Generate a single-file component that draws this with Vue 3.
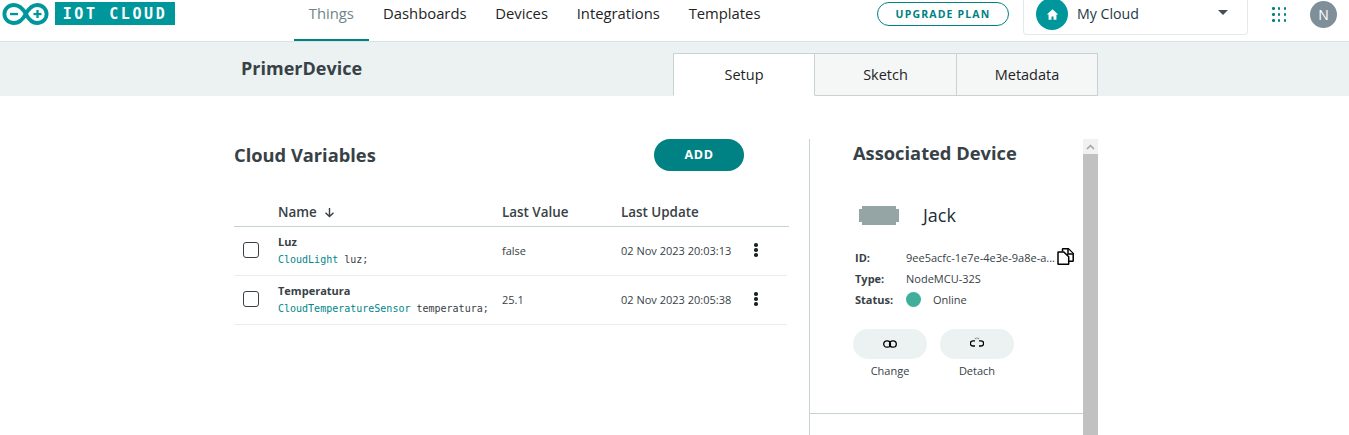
<script setup>
const navItems = ['Things', 'Dashboards', 'Devices', 'Integrations', 'Templates']
const tabs = ['Setup', 'Sketch', 'Metadata']
const variables = [
  { name: 'Luz', type: 'CloudLight', decl: 'luz;', value: 'false', updated: '02 Nov 2023 20:03:13' },
  { name: 'Temperatura', type: 'CloudTemperatureSensor', decl: 'temperatura;', value: '25.1', updated: '02 Nov 2023 20:05:38' }
]
const dots = [0, 1, 2, 3, 4, 5, 6, 7, 8]
</script>

<template>
  <div class="page">
    <header class="topbar">
      <div class="brand">
        <svg class="infinity" width="49" height="24" viewBox="0 0 49 24">
          <path d="M24.8 12C22 6.800 18.400 3 13 3 7.500 3 3.400 7 3.400 12s4.100 9 9.600 9c5.400 0 9-3.800 11.800-9 2.800-5.200 6.400-9 11.200-9 5.500 0 9.600 4 9.600 9s-4.100 9-9.600 9c-4.800 0-8.400-3.800-11.200-9z" fill="none" stroke="#00979c" stroke-width="3.800" />
          <rect x="9" y="10.900" width="8" height="2.300" fill="#00979c" />
          <rect x="32.500" y="10.900" width="8" height="2.300" fill="#00979c" />
          <rect x="35.350" y="8" width="2.300" height="8" fill="#00979c" />
        </svg>
        <span class="brand-box">IOT CLOUD</span>
      </div>
      <nav class="nav">
        <a v-for="(item, i) in navItems" :key="item" class="nav-item" :class="{ active: i === 0 }">{{ item }}</a>
      </nav>
      <button class="upgrade">UPGRADE PLAN</button>
      <div class="space-select">
        <span class="home">
          <svg width="15" height="15" viewBox="0 0 16 16">
            <path d="M8 2.500 2 8h1.800v5.500h3.100V10h2.200v3.500h3.100V8H14z" fill="#fff" />
          </svg>
        </span>
        <span class="space-name">My Cloud</span>
        <span class="caret"></span>
      </div>
      <div class="apps">
        <i v-for="d in dots" :key="d"></i>
      </div>
      <span class="avatar">N</span>
    </header>

    <section class="subbar">
      <h1 class="device-title">PrimerDevice</h1>
      <div class="tabs">
        <div v-for="(tab, i) in tabs" :key="tab" class="tab" :class="{ current: i === 0 }">{{ tab }}</div>
      </div>
    </section>

    <main class="content">
      <section class="vars">
        <div class="vars-head">
          <h2>Cloud Variables</h2>
          <button class="add">ADD</button>
        </div>
        <div class="row head-row">
          <span class="col-check"></span>
          <span class="col-name">Name
            <svg class="sort" width="11" height="11" viewBox="0 0 11 11">
              <path d="M5.500 1v8.500M1.500 5.800l4 3.800 4-3.800" fill="none" stroke="#374146" stroke-width="1.400" />
            </svg>
          </span>
          <span class="col-value">Last Value</span>
          <span class="col-update">Last Update</span>
        </div>
        <div v-for="v in variables" :key="v.name" class="row body-row">
          <span class="col-check"><span class="checkbox"></span></span>
          <div class="col-name">
            <div class="var-name">{{ v.name }}</div>
            <code class="var-code"><span class="var-type">{{ v.type }}</span> {{ v.decl }}</code>
          </div>
          <span class="col-value">{{ v.value }}</span>
          <span class="col-update">{{ v.updated }}</span>
          <span class="kebab"><i></i><i></i><i></i></span>
        </div>
      </section>

      <aside class="device">
        <div class="device-inner">
          <h2>Associated Device</h2>
          <div class="device-head">
            <svg width="42" height="21" viewBox="0 0 42 21">
              <rect x="1" y="1" width="40" height="19" fill="#95a5a6" />
              <path d="M1 1h3v3H1zM38 1h3v3h-3zM1 17h3v3H1zM38 17h3v3h-3z" fill="#fff" />
            </svg>
            <span class="device-name">Jack</span>
          </div>
          <dl class="info">
            <div class="info-row">
              <dt>ID:</dt>
              <dd class="id-value"><span>9ee5acfc-1e7e-4e3e-9a8e-a...</span>
                <svg class="copy" width="17" height="17" viewBox="0 0 17 17">
                  <path d="M5.500 3.500V1.200a.5.5 0 0 1 .5-.5h5.300l4.900 4.800v7.300a.5.5 0 0 1-.5.5h-3.700" fill="none" stroke="#000" stroke-width="1.500" />
                  <path d="M11 1v5h5M1.500 4h5.300l4.900 4.700v7.100a.5.5 0 0 1-.5.5H1.500a.5.5 0 0 1-.5-.5V4.500a.5.5 0 0 1 .5-.5z" fill="#fff" stroke="#000" stroke-width="1.500" />
                </svg>
              </dd>
            </div>
            <div class="info-row">
              <dt>Type:</dt>
              <dd>NodeMCU-32S</dd>
            </div>
            <div class="info-row">
              <dt>Status:</dt>
              <dd class="status"><span class="dot"></span>Online</dd>
            </div>
          </dl>
          <div class="actions">
            <div class="action">
              <span class="pill">
                <svg width="14" height="8" viewBox="0 0 14 8">
                  <rect x="0.700" y="0.800" width="6.800" height="6.400" rx="3.200" fill="none" stroke="#000" stroke-width="1.300" />
                  <rect x="6.500" y="0.800" width="6.800" height="6.400" rx="3.200" fill="none" stroke="#000" stroke-width="1.300" />
                </svg>
              </span>
              <span class="action-label">Change</span>
            </div>
            <div class="action">
              <span class="pill">
                <svg width="14" height="13" viewBox="0 0 14 13">
                  <path d="M5 3.800H3a2.600 2.600 0 0 0 0 5.200h2M9 3.800h2a2.600 2.600 0 0 1 0 5.200H9" fill="none" stroke="#000" stroke-width="1.300" />
                  <path d="M5.200 .8l.5 1.500M7 .3v1.700M8.800 .8l-.5 1.500" stroke="#7f8f8f" stroke-width="1" />
                </svg>
              </span>
              <span class="action-label">Detach</span>
            </div>
          </div>
          <div class="divider"></div>
        </div>
        <div class="scrollbar">
          <div class="scroll-up">
            <svg width="9" height="6" viewBox="0 0 9 6">
              <path d="M1 5l3.500-3.500L8 5" fill="none" stroke="#a3a3a3" stroke-width="1.500" />
            </svg>
          </div>
          <div class="scroll-thumb"></div>
        </div>
      </aside>
    </main>
  </div>
</template>

<style>
html, body {
  margin: 0;
  height: 100%;
  overflow: hidden;
  background: #fff;
}
</style>

<style scoped>
.page {
  height: 435px;
  overflow: hidden;
  font-family: "Open Sans", "Noto Sans", sans-serif;
  color: #374146;
  background: #fff;
}
.topbar {
  height: 41px;
  display: flex;
  align-items: flex-start;
  border-bottom: 1px solid #dae3e3;
}
.brand {
  width: 294px;
  flex: none;
  display: flex;
  align-items: flex-start;
  padding: 2px 0 0 1px;
  box-sizing: border-box;
}
.infinity {
  flex: none;
  margin-right: 5px;
}
.brand-box {
  width: 120px;
  height: 23px;
  background: #00979c;
  color: #fff;
  font-family: "DejaVu Sans Mono", monospace;
  font-weight: 700;
  font-size: 15px;
  line-height: 25px;
  letter-spacing: 2.6px;
  text-align: center;
  white-space: pre;
}
.nav {
  display: flex;
  width: 497px;
  flex: none;
}
.nav-item {
  height: 41px;
  box-sizing: border-box;
  padding: 0 14.4px;
  line-height: 27px;
  font-size: 14.8px;
  color: #1e2426;
  border-bottom: 2px solid transparent;
}
.nav-item.active {
  color: #6f8587;
  border-bottom-color: #008184;
  padding: 0 14.8px;
}
.upgrade {
  width: 132px;
  height: 24px;
  margin: 2px 0 0 86px;
  flex: none;
  padding: 0;
  border: 1px solid #008184;
  border-radius: 12px;
  background: #fff;
  color: #008184;
  font-family: inherit;
  font-size: 10.5px;
  font-weight: 700;
  letter-spacing: 1.15px;
}
.space-select {
  width: 225px;
  height: 35px;
  margin-left: 14px;
  flex: none;
  display: flex;
  align-items: flex-start;
  padding: 0 0 0 12px;
  box-sizing: border-box;
  border: 1px solid #e3eaea;
  border-top: 0;
  border-radius: 0 0 4px 4px;
}
.home {
  width: 32px;
  height: 32px;
  margin-top: -2px;
  border-radius: 50%;
  background: #00979c;
  display: flex;
  align-items: center;
  justify-content: center;
  flex: none;
}
.space-name {
  margin-left: 9px;
  font-size: 14.2px;
  line-height: 28px;
  color: #1f3a48;
}
.caret {
  margin: 10px 19px 0 auto;
  width: 0;
  height: 0;
  border-left: 5px solid transparent;
  border-right: 5px solid transparent;
  border-top: 5px solid #434f54;
}
.apps {
  width: 14px;
  margin: 7px 0 0 24px;
  flex: none;
  display: grid;
  grid-template-columns: repeat(3, 2.5px);
  grid-auto-rows: 2.5px;
  row-gap: 3.5px;
  justify-content: space-between;
}
.apps i {
  background: #008184;
  border-radius: 50%;
}
.avatar {
  width: 27px;
  height: 27px;
  margin: 1px 0 0 24px;
  flex: none;
  border-radius: 50%;
  background: #7f8f99;
  color: #fff;
  font-size: 14px;
  line-height: 27px;
  text-align: center;
}
.subbar {
  height: 54px;
  background: #ecf1f1;
  display: flex;
  padding-left: 241px;
  box-sizing: border-box;
}
.device-title {
  width: 432px;
  flex: none;
  margin: 0;
  font-size: 18px;
  font-weight: 700;
  line-height: 52px;
}
.tabs {
  display: flex;
  margin-top: 11px;
  height: 43px;
}
.tab {
  width: 142px;
  box-sizing: border-box;
  border: 1px solid #c9d2d2;
  border-left-width: 0;
  background: #f5f7f7;
  text-align: center;
  font-size: 14.5px;
  line-height: 41px;
  color: #1e2426;
}
.tab:first-child {
  border-left-width: 1px;
}
.tab:last-child {
  width: 141px;
}
.tab.current {
  background: #fff;
  border-bottom-color: #fff;
}
.content {
  display: flex;
  padding: 43px 0 0 234px;
}
.vars {
  width: 555px;
  flex: none;
}
.vars-head {
  height: 32px;
  width: 510px;
  display: flex;
  justify-content: space-between;
  align-items: center;
}
.vars-head h2 {
  margin: 0 0 2px;
  font-size: 18.3px;
  font-weight: 700;
}
.add {
  width: 90px;
  height: 32px;
  padding: 0 0 2px;
  border: 0;
  border-radius: 16px;
  background: #008184;
  color: #fff;
  font-family: inherit;
  font-size: 12.5px;
  font-weight: 700;
  letter-spacing: 0.7px;
}
.row {
  display: flex;
  align-items: center;
  font-size: 11px;
}
.head-row {
  margin-top: 29px;
  height: 23px;
  font-size: 13.4px;
  font-weight: 600;
  border-bottom: 1px solid #c9d2d2;
  padding-bottom: 3px;
}
.body-row {
  height: 46px;
  padding-bottom: 2px;
  width: 553px;
  border-bottom: 1px solid #e8eded;
}
.col-check {
  width: 44px;
  flex: none;
  display: flex;
  padding-left: 9px;
  box-sizing: border-box;
}
.col-name {
  width: 224px;
  flex: none;
  white-space: nowrap;
}
.col-value {
  width: 119px;
  flex: none;
}
.col-update {
  width: 128px;
  flex: none;
  white-space: nowrap;
}
.sort {
  margin-left: 4px;
  vertical-align: -1px;
}
.checkbox {
  width: 14px;
  height: 14px;
  border: 1.5px solid #374146;
  border-radius: 3px;
  display: block;
}
.var-name {
  font-weight: 700;
  font-size: 11px;
  line-height: 15px;
}
.var-code {
  display: block;
  margin-top: 4px;
  font-family: "DejaVu Sans Mono", monospace;
  font-size: 10px;
  line-height: 14px;
  white-space: pre;
}
.var-type {
  color: #00868b;
}
.kebab {
  display: flex;
  flex-direction: column;
  gap: 1.5px;
  margin-left: 5px;
}
.kebab i {
  width: 3.5px;
  height: 3.5px;
  border-radius: 50%;
  background: #1e2426;
}
.device {
  margin-left: 20px;
  display: flex;
  width: 289px;
  flex: none;
  height: 296px;
  border-left: 1px solid #c9d2d2;
}
.device-inner {
  width: 273px;
  flex: none;
}
.device-inner h2 {
  margin: 2px 0 0 43px;
  font-size: 18.3px;
  font-weight: 700;
  line-height: 24px;
}
.device-head {
  display: flex;
  align-items: center;
  margin: 37px 0 0 48px;
  height: 26px;
}
.device-name {
  margin-left: 23px;
  font-size: 18px;
  color: #1a2e38;
}
.info {
  margin: 18.6px 0 0 45px;
  font-size: 11px;
}
.info-row {
  display: flex;
  align-items: center;
  height: 21px;
}
.info-row dt {
  width: 51px;
  flex: none;
  font-weight: 700;
}
.info-row dd {
  margin: 0;
  white-space: nowrap;
}
.id-value {
  display: flex;
  align-items: center;
}
.copy {
  margin: -1px 0 0 2px;
}
.status {
  display: flex;
  align-items: center;
}
.dot {
  width: 15px;
  height: 15px;
  border-radius: 50%;
  background: #3fae9a;
  margin-right: 12px;
}
.actions {
  display: flex;
  gap: 13px;
  margin: 19.4px 0 0 43px;
}
.action {
  width: 74px;
  display: flex;
  flex-direction: column;
  align-items: center;
}
.pill {
  width: 74px;
  height: 30px;
  border-radius: 15px;
  background: #ecf1f1;
  display: flex;
  align-items: center;
  justify-content: center;
}
.action-label {
  margin-top: 4px;
  font-size: 11px;
  line-height: 16px;
}
.divider {
  margin-top: 34px;
  border-top: 1px solid #c9d2d2;
}
.scrollbar {
  width: 15px;
  flex: none;
  display: flex;
  flex-direction: column;
}
.scroll-up {
  height: 15px;
  background: #f1f1f1;
  display: flex;
  align-items: center;
  justify-content: center;
}
.scroll-thumb {
  flex: 1;
  background: #c1c1c1;
}
</style>
